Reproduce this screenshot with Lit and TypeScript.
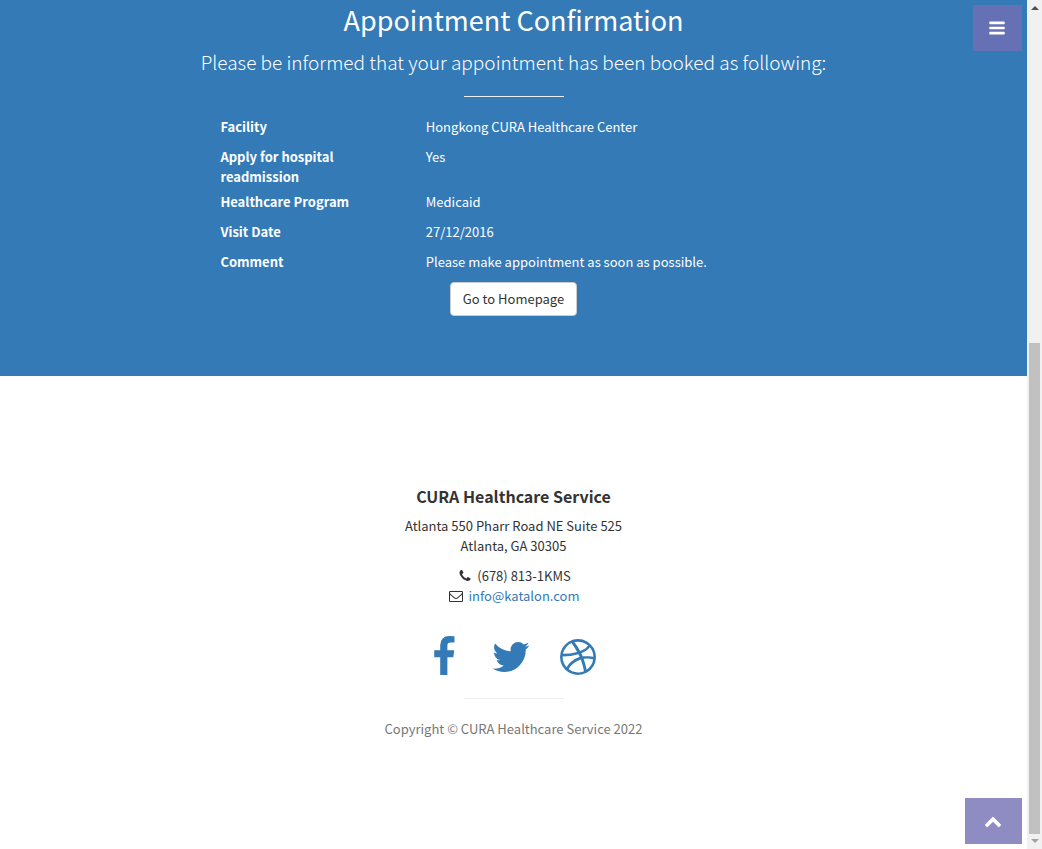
import { LitElement, html, css, svg } from "lit";
import { customElement, property } from "lit/decorators.js";

const ICONS: Record<string, string> = {
  bars: "M1664 1344v128q0 26-19 45t-45 19h-1408q-26 0-45-19t-19-45v-128q0-26 19-45t45-19h1408q26 0 45 19t19 45zm0-512v128q0 26-19 45t-45 19h-1408q-26 0-45-19t-19-45v-128q0-26 19-45t45-19h1408q26 0 45 19t19 45zm0-512v128q0 26-19 45t-45 19h-1408q-26 0-45-19t-19-45v-128q0-26 19-45t45-19h1408q26 0 45 19t19 45z",
  facebook: "M1343 12v264h-157q-86 0-116 36t-30 108v189h293l-39 296h-254v759h-306v-759h-255v-296h255v-218q0-186 104-288.500t277-102.500q147 0 228 12z",
  twitter: "M1684 408q-67 98-162 167 1 14 1 42 0 130-38 259.500t-115.500 248.500-184.500 210.500-258 146-323 54.500q-271 0-496-145 35 4 78 4 225 0 401-138-105-2-188-64.500t-114-159.500q33 5 61 5 43 0 85-11-112-23-185.500-111.500t-73.500-205.500v-4q68 38 146 41-66-44-105-115t-39-154q0-88 44-163 121 149 294.500 238.500t371.500 99.500q-8-38-8-74 0-134 94.500-228.500t228.500-94.500q140 0 236 102 109-21 205-78-37 115-142 178 93-10 186-50z",
  dribbble: "M1152 1500q-42-241-140-498h-2l-2 1q-16 6-43 16.500t-101 49-137 82-131 114.500-103 148l-15-11q184 150 418 150 132 0 256-52zm-185-607q-21-49-53-111-311 93-673 93-1 7-1 21 0 124 44 236.500t124 201.500q50-89 123.500-166.500t142.500-124.500 130.500-81 99.500-48l37-13q4-1 13-3.500t13-4.500zm-107-212q-120-213-244-378-138 65-234 186t-128 272q302 0 606-80zm684 319q-210-60-409-29 87 239 128 469 111-75 185-189.500t96-250.500zm-805-741q-1 0-2 1 1-1 2-1zm590 145q-185-164-433-164-76 0-155 19 131 170 246 382 69-26 130-60.500t96.500-61.500 65.500-57 37.500-40.500zm223 485q-3-232-149-410l-1 1q-9 12-19 24.500t-43.500 44.500-71 60.500-100 65-131.500 64.500q25 53 44 95 2 5 6.500 17t7.500 17q36-5 74.500-7t73.500-2 69 1.500 64 4 56.500 5.500 48 6.500 36.500 6 25 4.500zm112 7q0 209-103 385.500t-279.500 279.500-385.500 103-385.500-103-279.500-279.500-103-385.500 103-385.500 279.500-279.500 385.500-103 385.500 103 279.500 279.500 103 385.500z",
  phone: "M1600 1240q0 27-10 70.500t-21 68.500q-21 50-122 106-94 51-186 51-27 0-53-3.500t-57.500-12.500-47-14.500-55.500-20.500-49-18q-98-35-175-83-127-79-264-216t-216-264q-48-77-83-175-3-9-18-49t-20.500-55.500-14.500-47-12.500-57.500-3.500-53q0-92 51-186 56-101 106-122 25-11 68.500-21t70.500-10q14 0 21 3 18 6 53 76 11 19 30 54t35 63.500 31 53.500q3 4 17.500 25t21.500 35.500 7 28.500q0 20-28.500 50t-62 55-62 53-28.500 46q0 9 5 22.500t8.500 20.500 14 24 11.500 19q76 137 174 235t235 174q2 1 19 11.500t24 14 20.500 8.500 22.500 5q18 0 46-28.500t53-62 55-62 50-28.500q14 0 28.500 7t35.500 21.500 25 17.500q25 15 53.500 31t63.500 35 54 30q70 35 76 53 3 7 3 21z",
  envelope: "M1664 1504v-768q-32 36-69 66-268 206-426 338-51 43-83 67t-86.500 48.500-102.500 24.500h-2q-48 0-102.500-24.500t-86.500-48.500-83-67q-158-132-426-338-37-30-69-66v768q0 13 9.500 22.500t22.500 9.500h1472q13 0 22.500-9.500t9.500-22.500zm0-1051v-24.500l-.5-13-3-12.500-5.500-9-9-7.500-14-2.500h-1472q-13 0-22.500 9.500t-9.500 22.500q0 168 147 284 193 152 401 317 6 5 35 29.500t46 37.500 44.500 31.500 50.500 27.500 43 9h2q20 0 43-9t50.500-27.500 44.500-31.500 46-37.500 35-29.500q208-165 401-317 54-43 100.500-115.500t46.500-131.500zm128-37v1088q0 66-47 113t-113 47h-1472q-66 0-113-47t-47-113v-1088q0-66 47-113t113-47h1472q66 0 113 47t47 113z",
  chevron: "M1683 1331l-166 165q-19 19-45 19t-45-19l-531-531-531 531q-19 19-45 19t-45-19l-166-165q-19-19-19-45.500t19-45.500l742-741q19-19 45-19t45 19l742 741q19 19 19 45.500t-19 45.500z",
};

@customElement("cura-icon")
class CuraIcon extends LitElement {
  @property() name = "";

  static styles = css`
    :host { display: inline-flex; justify-content: center; align-items: center; }
    .glyph { display: block; width: var(--icon-size, 14px); height: var(--icon-size, 14px); fill: currentColor; }
  `;

  render() {
    return html`<svg class="glyph" viewBox="0 0 1792 1792" aria-hidden="true">${svg`<path d=${ICONS[this.name] ?? ""}></path>`}</svg>`;
  }
}

const DETAILS = [
  ["Facility", "Hongkong CURA Healthcare Center"],
  ["Apply for hospital readmission", "Yes"],
  ["Healthcare Program", "Medicaid"],
  ["Visit Date", "27/12/2016"],
  ["Comment", "Please make appointment as soon as possible."],
];

const SOCIAL = [
  ["facebook", "Facebook"],
  ["twitter", "Twitter"],
  ["dribbble", "Dribbble"],
];

@customElement("app-root")
class AppRoot extends LitElement {
  static styles = css`
    :host {
      display: grid;
      grid-template-columns: minmax(0, 1fr) 15px;
      min-height: 100vh;
      background: #fff;
      color: #333;
      font: 13px/20px "Source Sans Pro", "Noto Sans CJK SC", sans-serif;
    }
    *, *::before, *::after { box-sizing: border-box; }
    h2, h4, p, dl, dd, ul { margin: 0; padding: 0; }
    a { color: #337ab7; text-decoration: none; }

    .confirmation { padding: 4px 0 60px; background: #337ab7; color: #fff; text-align: center; }
    .title { font-size: 27px; line-height: 32px; font-weight: 400; }
    .lead { margin-top: 12px; font-size: 19px; line-height: 28px; font-weight: 300; }
    .rule { width: 100px; height: 1px; margin: 20px auto; border: 0; background: #eee; }
    .confirmation .rule { margin-bottom: 15px; }
    .details { text-align: left; }
    .row { display: grid; grid-template-columns: 1fr 3fr; min-height: 30px; margin-left: 20%; padding-top: 5px; }
    .label, .value { padding: 0 15px; }
    .label { font-weight: 700; }
    .home {
      display: inline-block; margin-top: 5px; padding: 6px 12px; border: 1px solid #ccc;
      border-radius: 4px; background: #fff; color: #333; vertical-align: top;
    }

    .footer { padding: 110px 15px 100px; text-align: center; }
    .brand { font-size: 16px; line-height: 20px; font-weight: 700; }
    .address, .contact { margin-top: 10px; }
    .contact, .social { list-style: none; }
    .contact li { display: flex; justify-content: center; gap: 3px; }
    .contact cura-icon { width: 18px; }
    .social { display: flex; justify-content: center; gap: 13px; margin-top: 30px; padding-right: 6px; }
    .social a { display: block; }
    .social cura-icon { --icon-size: 42px; width: 54px; display: flex; }
    .copyright { color: #777; }

    .float {
      position: fixed; right: 20px; height: 46px; padding: 0 16px 0 15px; display: flex; align-items: center;
      justify-content: center; border: 0; background: rgba(115, 110, 180, 0.8); color: #fff; cursor: pointer;
      --icon-size: 18px;
    }
    .menu { top: 5px; width: 49px; }
    .top { bottom: 5px; width: 57px; }

    .scrollbar { display: flex; flex-direction: column; align-items: center; height: 100vh; padding: 6px 2px; background: #f1f1f1; }
    .arrow { width: 8px; height: 4px; fill: #505050; }
    .arrow.down { fill: #a3a3a3; }
    .track { display: flex; flex: 1; flex-direction: column; justify-content: flex-end; align-self: stretch; margin: 5px 0; }
    .thumb { height: 60%; width: 11px; background: #c1c1c1; }
  `;

  render() {
    return html`
      <div class="page">
        <section class="confirmation">
          <h2 class="title">Appointment Confirmation</h2>
          <p class="lead">Please be informed that your appointment has been booked as following:</p>
          <hr class="rule" />
          <dl class="details">
            ${DETAILS.map(([label, value]) => html`
              <div class="row"><dt class="label">${label}</dt><dd class="value">${value}</dd></div>
            `)}
          </dl>
          <a class="home" href="#home">Go to Homepage</a>
        </section>
        <footer class="footer">
          <h4 class="brand">CURA Healthcare Service</h4>
          <p class="address">Atlanta 550 Pharr Road NE Suite 525<br />Atlanta, GA 30305</p>
          <ul class="contact">
            <li><cura-icon name="phone"></cura-icon><span>(678) 813-1KMS</span></li>
            <li><cura-icon name="envelope"></cura-icon><a href="mailto:info@katalon.com">info@katalon.com</a></li>
          </ul>
          <ul class="social">
            ${SOCIAL.map(([name, label]) => html`
              <li><a href="#${name}" aria-label=${label}><cura-icon name=${name}></cura-icon></a></li>
            `)}
          </ul>
          <hr class="rule" />
          <p class="copyright">Copyright © CURA Healthcare Service 2022</p>
        </footer>
      </div>
      <div class="scrollbar" aria-hidden="true">
        <svg class="arrow" viewBox="0 0 8 4"><path d="M0 4L4 0L8 4Z"></path></svg>
        <div class="track"><div class="thumb"></div></div>
        <svg class="arrow down" viewBox="0 0 8 4"><path d="M0 0L4 4L8 0Z"></path></svg>
      </div>
      <button class="float menu" aria-label="Open menu"><cura-icon name="bars"></cura-icon></button>
      <button class="float top" aria-label="Back to top"><cura-icon name="chevron"></cura-icon></button>
    `;
  }
}
